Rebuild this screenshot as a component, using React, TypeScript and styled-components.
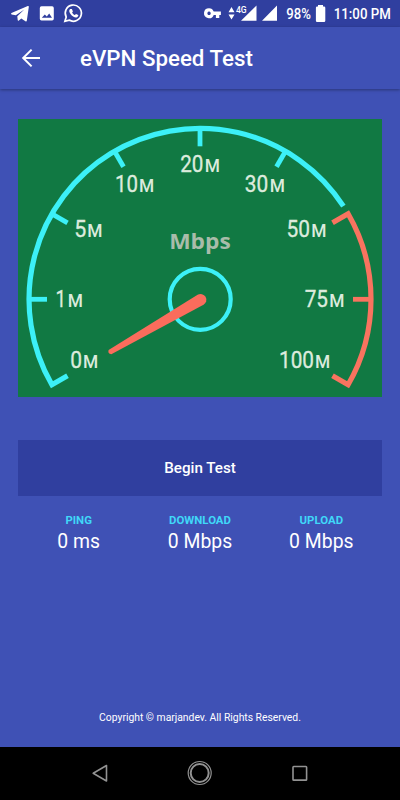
import React from "react";
import styled, { createGlobalStyle } from "styled-components";

const GlobalStyle = createGlobalStyle`
  * { box-sizing: border-box; }
  body { margin: 0; background: #3f51b5; font-family: Roboto, "Liberation Sans", sans-serif; color: #fff; }
`;

const Screen = styled.div`
  width: 400px;
  height: 800px;
  display: flex;
  flex-direction: column;
  background: #3f51b5;
  overflow: hidden;
`;

const StatusBar = styled.div`
  height: 27px;
  flex: none;
  background: #303f9f;
`;

const Drawing = styled.svg`
  display: block;
`;

const AppBar = styled.header`
  height: 62px;
  flex: none;
  display: flex;
  align-items: center;
  padding-left: 21px;
  box-shadow: 0 1px 3px rgba(0, 0, 0, 0.35);
`;

const BackButton = styled.button`
  width: 20px;
  height: 20px;
  padding: 0;
  margin: -1px 39px 0 0;
  border: 0;
  background: none;
`;

const Title = styled.h1`
  margin: 0;
  font-size: 22.3px;
  line-height: 28px;
  font-weight: 500;
  white-space: nowrap;
`;

const Content = styled.main`
  flex: 1;
  display: flex;
  flex-direction: column;
  padding: 30px 18px 0;
`;

const GaugePanel = styled.section`
  width: 364px;
  height: 278px;
  flex: none;
  background: #117943;
`;

const BeginButton = styled.button`
  height: 56px;
  flex: none;
  margin-top: 43px;
  padding: 0;
  border: 0;
  background: #303f9f;
  color: #fff;
  font: 500 15.2px Roboto, sans-serif;
`;

const Results = styled.div`
  display: grid;
  grid-template-columns: repeat(3, 1fr);
  margin-top: 16px;
`;

const Result = styled.div`
  display: flex;
  flex-direction: column;
  align-items: center;
`;

const ResultLabel = styled.span`
  font-size: 11.4px;
  line-height: 16px;
  font-weight: 700;
  color: #40d8f8;
`;

const ResultValue = styled.span`
  margin-top: 2px;
  font-size: 19.4px;
  line-height: 24px;
`;

const Footer = styled.footer`
  margin-top: auto;
  margin-bottom: 21px;
  text-align: center;
  font-size: 10.35px;
  line-height: 16px;
`;

const NavBar = styled.nav`
  height: 53px;
  flex: none;
  background: #000;
`;

const CX = 200;
const CY = 299.3;
const R = 171;

const point = (deg: number, r: number) => {
  const a = (deg * Math.PI) / 180;
  return `${(CX + r * Math.cos(a)).toFixed(2)} ${(CY - r * Math.sin(a)).toFixed(2)}`;
};

const CYAN = "#3cf0f7";
const RED = "#f9735f";

const ticks = [
  { deg: 180, color: CYAN },
  { deg: 150, color: CYAN },
  { deg: 120, color: CYAN },
  { deg: 90, color: CYAN },
  { deg: 60, color: CYAN },
  { deg: 0, color: RED },
];

const labels = [
  { value: "0", x: 70.3, w: 11.8, mx: 83, y: 368 },
  { value: "1", x: 55.5, w: 10.5, mx: 67.8, y: 307 },
  { value: "5", x: 74.2, w: 12, mx: 87.2, y: 237 },
  { value: "10", x: 115, w: 23, mx: 139, y: 192 },
  { value: "20", x: 180.2, w: 23.2, mx: 204.8, y: 172 },
  { value: "30", x: 244.8, w: 23.5, mx: 269.7, y: 192 },
  { value: "50", x: 286.5, w: 23.5, mx: 311.2, y: 237 },
  { value: "75", x: 304.7, w: 23.3, mx: 329.2, y: 307 },
  { value: "100", x: 279, w: 35, mx: 314.9, y: 368 },
];

const Gauge = () => (
  <Drawing width="364" height="278" viewBox="18 119 364 278" fill="none">
    <path d={`M${point(210, 153)} L${point(210, R)} A${R} ${R} 0 0 1 ${point(33, R)}`} stroke={CYAN} strokeWidth="5.2" />
    <path d={`M${point(30, 153)} L${point(30, R)} A${R} ${R} 0 0 1 ${point(-30, R)} L${point(-30, 153)}`} stroke={RED} strokeWidth="5.2" />
    {ticks.map((t) => (
      <path key={t.deg} d={`M${point(t.deg, 153)} L${point(t.deg, R)}`} stroke={t.color} strokeWidth="4.8" />
    ))}
    <circle cx="200.2" cy="299.3" r="30.5" stroke={CYAN} strokeWidth="4.2" />
    <path d="M108.6 350 L197.6 294.8 A5.8 5.8 0 1 1 203.5 304.8 L111.3 354.2 Q107.5 353.8 108.6 350 Z" fill="#fb6c5c" />
    <g fill="#dcebdd" fontFamily="Roboto, sans-serif">
      {labels.map((l) => (
        <text key={l.value} y={l.y}>
          <tspan x={l.x} fontSize="24.6" stroke="#dcebdd" strokeWidth="0.35" textLength={l.w} lengthAdjust="spacingAndGlyphs">{l.value}</tspan>
          <tspan x={l.mx} fontSize="17.5" fontWeight="500" textLength="15.2" lengthAdjust="spacingAndGlyphs">M</tspan>
        </text>
      ))}
    </g>
    <text x="169.2" y="248.8" fontSize="22" fontWeight="700" fontFamily="'Open Sans', 'Noto Sans', sans-serif" fill="#a9bcaa" textLength="61.5" lengthAdjust="spacingAndGlyphs">Mbps</text>
  </Drawing>
);

const StatusContents = () => (
  <Drawing width="400" height="27" viewBox="0 0 400 27" fill="#fff">
    <path d="M11 13.8 Q11 13.2 12 12.8 L27.8 6 Q29 5.6 28.8 7 L26.8 20.8 Q26.5 21.9 25.4 21.2 L21.3 18.4 L18.9 20.4 Q17.8 21 17.7 20 L17.3 16.2 L24.3 9.6 L15.8 15.3 L11.6 14.4 Z" />
    <path fillRule="evenodd" d="M41.5 6.2 h10.6 a1.7 1.7 0 0 1 1.7 1.7 v10.8 a1.7 1.7 0 0 1 -1.7 1.7 h-10.6 a1.7 1.7 0 0 1 -1.7 -1.7 v-10.8 a1.7 1.7 0 0 1 1.7 -1.7 Z M41.8 17.8 h10.2 l-2.8 -4.3 l-2.4 3 l-2 -2 Z" />
    <path d="M64.9 21.3 L66.2 17 A8.1 8.1 0 1 1 69.2 20.1 Z" fill="none" stroke="#fff" strokeWidth="1.7" />
    <path d="M70.1 9 c-1.4 1.2 -1 3.1 .4 4.9 c1.6 2.2 3.7 3.7 5.7 3.6 c1.4 -.1 2.2 -1.2 2.1 -2.4 l-2.3 -1.1 l-1.1 1.1 c-1.3 -.5 -2.3 -1.5 -2.8 -2.7 l.8 -1 l-1 -2.4 Z" />
    <path fillRule="evenodd" d="M209 8.2 a5 5 0 0 1 4.7 3.4 h7.2 v3.3 h-1.6 v3.2 h-3.4 v-3.2 h-2.2 a5 5 0 1 1 -4.7 -6.7 Z M209 11.6 a1.7 1.7 0 1 0 .1 0 Z" />
    <path d="M228.5 12.2 L231.5 7 L234.5 12.2 Z M228.5 14.4 H234.5 L231.5 19.6 Z" />
    <path d="M241 20.8 L256.5 5.6 V20.8 Z M262 20.8 L277 5.6 V20.8 Z" />
    <path d="M318 6.5 v-1.6 h5 v1.6 h1 a1.3 1.3 0 0 1 1.3 1.3 v13 a1.2 1.2 0 0 1 -1.2 1.2 h-7 a1.2 1.2 0 0 1 -1.2 -1.2 v-13 a1.3 1.3 0 0 1 1.3 -1.3 Z" />
    <g fontFamily="Roboto, sans-serif" fontWeight="500">
      <text x="236" y="12.5" fontSize="9.5" textLength="10.7" lengthAdjust="spacingAndGlyphs">4G</text>
      <text x="286.3" y="19" fontSize="14.2" textLength="24.6" lengthAdjust="spacingAndGlyphs">98%</text>
      <text x="333.8" y="19" fontSize="14.6" textLength="57" lengthAdjust="spacingAndGlyphs">11:00 PM</text>
    </g>
  </Drawing>
);

const results = [
  { label: "PING", value: "0 ms" },
  { label: "DOWNLOAD", value: "0 Mbps" },
  { label: "UPLOAD", value: "0 Mbps" },
];

export default function App() {
  return (
    <Screen>
      <GlobalStyle />
      <StatusBar>
        <StatusContents />
      </StatusBar>
      <AppBar>
        <BackButton aria-label="Back">
          <Drawing width="20" height="20" viewBox="0 0 20 20" fill="none" stroke="#fff" strokeWidth="2">
            <path d="M19 10 H2.5 M10.6 1.6 L2.2 10 L10.6 18.4" />
          </Drawing>
        </BackButton>
        <Title>eVPN Speed Test</Title>
      </AppBar>
      <Content>
        <GaugePanel>
          <Gauge />
        </GaugePanel>
        <BeginButton>Begin Test</BeginButton>
        <Results>
          {results.map((r) => (
            <Result key={r.label}>
              <ResultLabel>{r.label}</ResultLabel>
              <ResultValue>{r.value}</ResultValue>
            </Result>
          ))}
        </Results>
        <Footer>Copyright © marjandev. All Rights Reserved.</Footer>
      </Content>
      <NavBar>
        <Drawing width="400" height="53" viewBox="0 747 400 53" fill="none" stroke="#929292" strokeWidth="1.6">
          <path d="M106.5 765.5 V781 L93.2 773.3 Z" strokeLinejoin="round" />
          <circle cx="199.7" cy="773" r="11.5" strokeWidth="1.2" />
          <circle cx="199.7" cy="773" r="9" strokeWidth="2" />
          <rect x="293" y="766.5" width="13.6" height="13.6" rx="0.7" />
        </Drawing>
      </NavBar>
    </Screen>
  );
}
